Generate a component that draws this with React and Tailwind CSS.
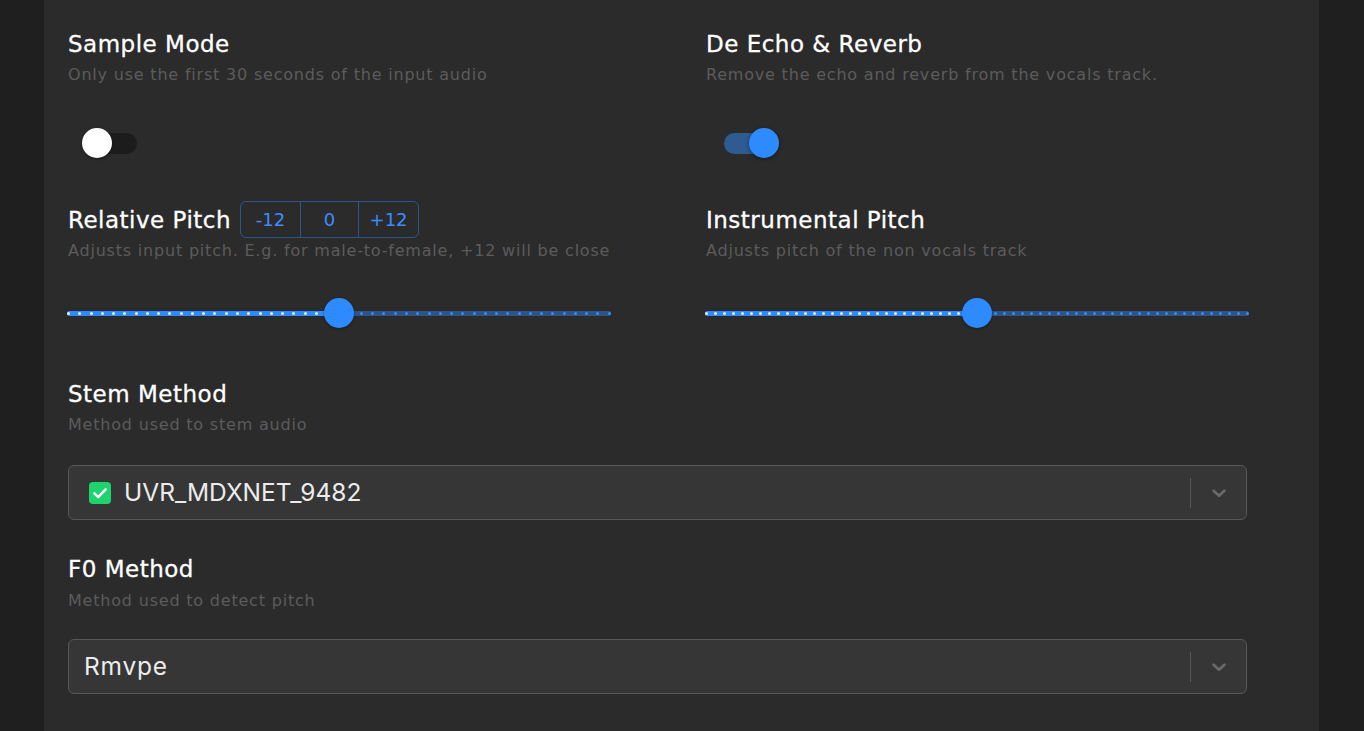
import React from "react";

const heading = { fontFamily: '"DejaVu Sans", "Open Sans", sans-serif' };
const body = { fontFamily: 'Inter, "Liberation Sans", sans-serif' };

const Dots = ({ count, split, onColor, offColor }) => (
  <div className="absolute inset-0 flex items-center justify-between">
    {Array.from({ length: count }).map((_, i) => (
      <span
        key={i}
        className={`block w-[3px] h-[3px] rounded-full ${i <= split ? onColor : offColor}`}
      />
    ))}
  </div>
);

const Slider = ({ steps }) => {
  const mid = Math.floor(steps / 2);
  return (
    <div className="relative w-[544px] h-[30px] flex items-center">
      <div className="relative w-full h-[5px] rounded-full flex">
        <div className="w-1/2 h-full bg-[#2e8bff] rounded-l-full" />
        <div className="w-1/2 h-full bg-[#2d5487] rounded-r-full" />
        <Dots count={steps + 1} split={mid} onColor="bg-white/90" offColor="bg-[#3a8cf5]" />
      </div>
      <div className="absolute left-1/2 top-0 -ml-[15px] w-[30px] h-[30px] rounded-full bg-[#2e8bff] shadow-[0_1px_3px_rgba(0,0,0,0.35)]" />
    </div>
  );
};

const Title = ({ children }) => (
  <h2 className="text-[23px] leading-8 text-white tracking-[0.5px] [-webkit-text-stroke:0.3px_white]" style={heading}>
    {children}
  </h2>
);

const Desc = ({ children, className = "" }) => (
  <p className={`text-[16px] leading-6 text-[#5c5c5c] tracking-[0.8px] ${className}`} style={heading}>
    {children}
  </p>
);

const Chevron = () => (
  <svg width="18" height="18" viewBox="0 0 20 20" className="text-[#6a6a6a]">
    <path d="M4 7.5 L10 13 L16 7.5" fill="none" stroke="currentColor" strokeWidth="3" strokeLinecap="round" strokeLinejoin="round" />
  </svg>
);

const Select = ({ children, className = "" }) => (
  <div className={`w-[1179px] h-[55px] rounded-md border border-[#585858] bg-[#363636] flex items-center ${className}`}>
    <div className="flex-1 flex items-center">{children}</div>
    <div className="w-px h-[30px] bg-[#585858]" />
    <div className="w-[55px] flex items-center justify-center">
      <Chevron />
    </div>
  </div>
);

export default function App() {
  return (
    <div className="w-[1364px] h-[731px] bg-[#1f1f1f] flex overflow-hidden">
      <div className="ml-[44px] w-[1275px] h-full bg-[#2b2b2b] px-6 pt-[28px]">
        <div className="grid grid-cols-[544px_544px] gap-x-[94px]">
          <div>
            <Title>Sample Mode</Title>
            <Desc className="mt-[3px]">Only use the first 30 seconds of the input audio</Desc>
            <div className="mt-[41px] h-[30px] ml-[14px] relative w-[55px] flex items-center">
              <div className="w-[55px] h-[21px] rounded-full bg-[#1c1c1c]" />
              <div className="absolute left-0 top-0 w-[30px] h-[30px] rounded-full bg-white shadow-[0_1px_3px_rgba(0,0,0,0.4)]" />
            </div>
          </div>
          <div>
            <Title>De Echo &amp; Reverb</Title>
            <Desc className="mt-[3px]">Remove the echo and reverb from the vocals track.</Desc>
            <div className="mt-[41px] h-[30px] ml-[18px] relative w-[55px] flex items-center">
              <div className="w-[50px] h-[21px] rounded-full bg-[#2f5b93]" />
              <div className="absolute right-0 top-0 w-[30px] h-[30px] rounded-full bg-[#2e8bff] shadow-[0_1px_4px_rgba(0,0,0,0.45)]" />
            </div>
          </div>

          <div className="mt-[43px]">
            <div className="flex items-center h-[37px]">
              <Title>Relative Pitch</Title>
              <div className="ml-[9px] flex h-[37px] rounded-md border border-[#2d5689] text-[#3b8cff] text-[18px]" style={heading}>
                <button className="w-[59px] flex items-center justify-center">-12</button>
                <button className="w-[58px] flex items-center justify-center border-l border-[#2d5689]">0</button>
                <button className="w-[60px] flex items-center justify-center border-l border-[#2d5689]">+12</button>
              </div>
            </div>
            <Desc className="mt-px">Adjusts input pitch. E.g. for male-to-female, +12 will be close</Desc>
            <div className="mt-[35px] -ml-px">
              <Slider steps={48} />
            </div>
          </div>
          <div className="mt-[43px]">
            <div className="flex items-center h-[37px]">
              <Title>Instrumental Pitch</Title>
            </div>
            <Desc className="mt-px">Adjusts pitch of the non vocals track</Desc>
            <div className="mt-[35px] -ml-px">
              <Slider steps={60} />
            </div>
          </div>
        </div>

        <div className="mt-[50px]">
          <Title>Stem Method</Title>
          <Desc className="mt-[3px]">Method used to stem audio</Desc>
          <Select className="mt-[28px]">
            <span className="ml-5 w-[22px] h-[22px] rounded-[4px] bg-[#1fd36c] flex items-center justify-center">
              <svg width="18" height="18" viewBox="0 0 16 16">
                <path d="M3 8.3 L6.4 11.6 L13 4.8" fill="none" stroke="white" strokeWidth="2.2" strokeLinecap="round" strokeLinejoin="round" />
              </svg>
            </span>
            <span className="ml-[13px] text-[24.5px] text-[#ececec]" style={body}>UVR_MDXNET_9482</span>
          </Select>
        </div>

        <div className="mt-[33px]">
          <Title>F0 Method</Title>
          <Desc className="mt-[4px]">Method used to detect pitch</Desc>
          <Select className="mt-[26px]">
            <span className="ml-[15px] text-[24.5px] text-[#ececec] tracking-[0.8px]" style={body}>Rmvpe</span>
          </Select>
        </div>
      </div>
      <div className="flex-1 bg-[#1f1f1f]" />
    </div>
  );
}
